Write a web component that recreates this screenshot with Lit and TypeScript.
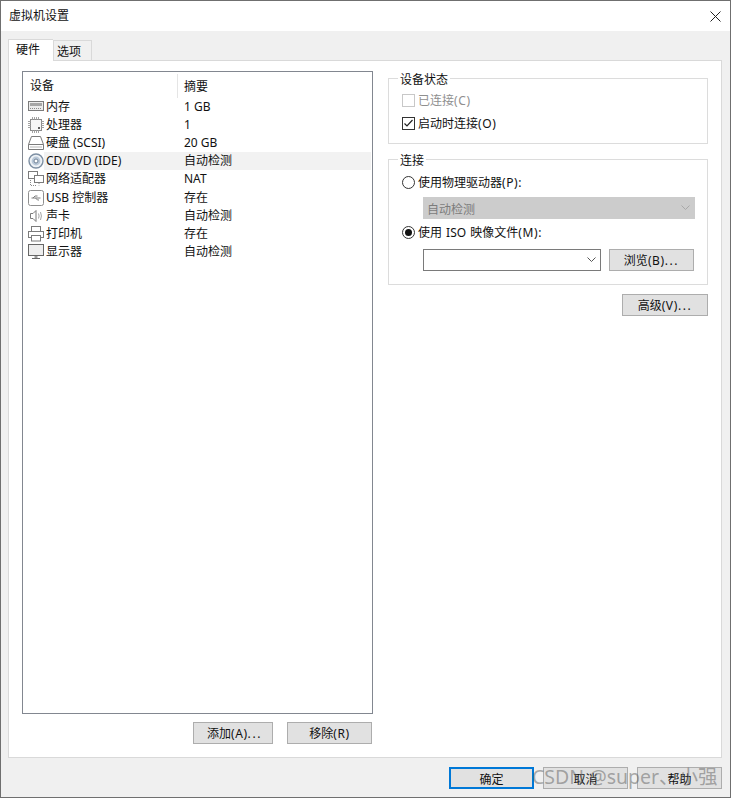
import { LitElement, html, css, svg } from "lit";
import { customElement } from "lit/decorators.js";

const g = "#7b7b7b";
const icons: Record<string, unknown> = {
  mem: svg`<rect x="0.5" y="2.5" width="15" height="9" fill="#ececec" stroke="${g}"/><rect x="2" y="4" width="12" height="3" fill="#a6a6a6"/><path d="M2 9.5h12" stroke="#8a8a8a" stroke-dasharray="1 1"/>`,
  cpu: svg`<rect x="2.5" y="2.5" width="11" height="11" fill="#f6f6f6" stroke="#8a8a8a"/><path d="M0 4.5h2.5M0 6.5h2.5M0 8.5h2.5M0 10.5h2.5M13.5 4.5h2.5M13.5 6.5h2.5M13.5 8.5h2.5M13.5 10.5h2.5M4.5 0v2.5M6.5 0v2.5M8.5 0v2.5M10.5 0v2.5M4.5 13.5v2.5M6.5 13.5v2.5M8.5 13.5v2.5M10.5 13.5v2.5" stroke="#a3a3a3"/><rect x="10" y="10" width="2" height="2" fill="#5f5f5f"/>`,
  disk: svg`<path d="M3.5 1.5h9l3 8v5h-15v-5z" fill="#fff" stroke="${g}"/><path d="M0.5 9.5h15" stroke="${g}"/><path d="M2 12h12" stroke="#b5b5b5"/>`,
  cd: svg`<circle cx="8" cy="8" r="7" fill="#eef2f6" stroke="#7d8fa3" stroke-width="1.4"/><circle cx="8" cy="8" r="4.4" fill="#b9c8d8"/><circle cx="8" cy="8" r="2" fill="#fff" stroke="#6f8196"/>`,
  net: svg`<rect x="0.5" y="0.5" width="9" height="7" fill="#fff" stroke="${g}"/><rect x="6.5" y="4.5" width="9" height="7" fill="#fff" stroke="${g}"/><path d="M2.5 9v5.5h6M11 12v2.5" stroke="#8a8a8a" stroke-dasharray="1 1" fill="none"/>`,
  usb: svg`<rect x="0.5" y="0.5" width="15" height="15" rx="2" fill="#fff" stroke="#8f8f8f"/><path d="M3.5 8h9M5 8l2-2h2.5M7.5 8l2 2h1.5" stroke="#7d7d7d" fill="none"/>`,
  snd: svg`<path d="M2.5 5.5h2.5l3-3v11l-3-3h-2.5z" fill="#fff" stroke="${g}"/><path d="M10.5 5.5q1.2 2.5 0 5M12.5 4q1.8 4 0 8" stroke="#a5a5a5" fill="none"/>`,
  prn: svg`<rect x="3.5" y="0.5" width="9" height="5" fill="#fff" stroke="${g}"/><rect x="0.5" y="5.5" width="15" height="6" fill="#fff" stroke="${g}"/><rect x="3.5" y="9.5" width="9" height="5.5" fill="#fff" stroke="${g}"/>`,
  mon: svg`<rect x="0.5" y="0.5" width="15" height="11" fill="#eeeeee" stroke="#666"/><path d="M8 12v2" stroke="#999" stroke-width="3"/><path d="M4 14.5h8" stroke="#666"/>`,
};

const rows = [
  ["mem", "内存", "1 GB"],
  ["cpu", "处理器", "1"],
  ["disk", "硬盘 (SCSI)", "20 GB"],
  ["cd", "CD/DVD (IDE)", "自动检测"],
  ["net", "网络适配器", "NAT"],
  ["usb", "USB 控制器", "存在"],
  ["snd", "声卡", "自动检测"],
  ["prn", "打印机", "存在"],
  ["mon", "显示器", "自动检测"],
];

@customElement("app-root")
export class AppRoot extends LitElement {
  static styles = css`
    :host {
      display: block;
      position: relative;
      width: 731px;
      height: 798px;
      font: 12px/16px "Noto Sans", "Noto Sans CJK SC", sans-serif;
      color: #111;
      overflow: hidden;
    }
    * { box-sizing: border-box; }
    .win {
      width: 731px;
      height: 798px;
      border: 1px solid #6f6f6f;
      background: #f0f0f0;
      display: flex;
      flex-direction: column;
    }
    .title {
      height: 30px;
      flex: none;
      background: #fff;
      display: flex;
      align-items: center;
      justify-content: space-between;
      padding: 0 9px 0 8px;
    }
    .close { width: 11px; height: 11px; display: block; }
    .tabs {
      flex: none;
      height: 29px;
      padding: 7px 0 0 7px;
      display: flex;
      align-items: flex-end;
    }
    .tab {
      height: 20px;
      width: 39px;
      border: 1px solid #d9d9d9;
      border-bottom: 0;
      padding-left: 3px;
      line-height: 21px;
    }
    .tab.on {
      height: 22px;
      width: 45px;
      padding-left: 7px;
      background: #fff;
      border-right: 0;
      margin-bottom: -1px;
      position: relative;
      line-height: 19px;
    }
    .panel {
      flex: none;
      height: 698px;
      margin: 0 8px 0 7px;
      background: #fff;
      border: 1px solid #d9d9d9;
      padding: 10px 13px 0 13px;
      display: flex;
      gap: 15px;
    }
    .left { width: 351px; display: flex; flex-direction: column; }
    .list {
      height: 643px;
      border: 1px solid #828790;
      padding: 1px;
    }
    .head {
      display: grid;
      grid-template-columns: 153px 1fr;
      height: 24px;
      align-items: center;
      margin-bottom: 1px;
      line-height: 26px;
    }
    .head span:first-child { padding-left: 6px; }
    .head span:last-child {
      height: 24px;
      border-left: 1px solid #e5e5e5;
      padding-left: 6px;
    }
    .row {
      display: grid;
      grid-template-columns: 20px 133px 1fr;
      height: 18px;
      line-height: 18px;
      align-items: center;
    }
    .row:nth-child(n + 7) { position: relative; top: 1px; }
    .row svg { width: 16px; height: 16px; margin-left: 4px; display: block; }
    .row .name { padding-left: 2px; height: 18px; }
    .row .val { padding-left: 7px; height: 18px; }
    .row.sel .name, .row.sel .val { background: #f2f2f2; }
    .actions {
      display: flex;
      justify-content: flex-end;
      gap: 14px;
      margin-top: 8px;
      padding-right: 1px;
    }
    .btn {
      height: 22px;
      width: 85px;
      background: #e1e1e1;
      border: 1px solid #adadad;
      text-align: center;
      line-height: 22px;
    }
    .btn.add { width: 80px; padding-left: 3px; }
    .p { letter-spacing: 0.6px; }
    .d { letter-spacing: 1.6px; }
    .right { width: 320px; display: flex; flex-direction: column; }
    fieldset {
      margin: 0;
      padding: 0 0 0 13px;
      min-width: 0;
      border: 1px solid #dcdcdc;
    }
    legend { padding: 0 2px; margin-left: -4px; line-height: 18px; height: 14px; }
    .g1 { height: 73px; padding-top: 7px; }
    .g2 { height: 133px; margin-top: 8px; }
    .opt {
      display: flex;
      align-items: center;
      gap: 3px;
      height: 16px;
      line-height: 17px;
      word-spacing: 1px;
    }
    .box {
      width: 13px;
      height: 13px;
      border: 1px solid #333;
      background: #fff;
      flex: none;
      display: block;
    }
    .dis { color: #8f8f8f; }
    .dis .box { border-color: #c8c8c8; }
    .radio {
      width: 13px;
      height: 13px;
      flex: none;
      display: block;
    }
    .g1 .opt + .opt { margin-top: 7px; }
    .sub { padding-left: 21px; display: flex; gap: 8px; }
    .sel-dis {
      width: 272px;
      height: 22px;
      background: #cccccc;
      color: #7c7c7c;
      display: flex;
      align-items: center;
      justify-content: space-between;
      padding: 0 5px 0 4px;
      margin-top: 7px;
    }
    .sel-dis span { padding-top: 3px; }
    .combo {
      width: 178px;
      height: 22px;
      border: 1px solid #7a7a7a;
      background: #fff;
      display: flex;
      align-items: center;
      justify-content: flex-end;
      padding-right: 4px;
    }
    .chev { width: 9px; height: 6px; display: block; }
    .g2 .r1 { margin-top: 8px; }
    .g2 .r2 { margin-top: 5px; }
    .g2 .sub.last { margin-top: 9px; }
    .adv { align-self: flex-end; margin-top: 9px; width: 86px; }
    .foot {
      flex: none;
      display: flex;
      justify-content: flex-end;
      gap: 9px;
      padding: 9px 8px 0 0;
    }
    .foot .btn { line-height: 23px; }
    .foot .btn.def { border: 2px solid #0078d7; line-height: 21px; }
    .mark {
      position: absolute;
      left: 532px;
      top: 763px;
      font: 19.5px/28px "Noto Sans", "Noto Sans CJK SC", sans-serif;
      color: rgba(105, 105, 105, 0.55);
      white-space: nowrap;
      pointer-events: none;
    }
  `;

  render() {
    const chev = (c: string) => html`<svg class="chev" viewBox="0 0 9 6"><path d="M0.5 0.5L4.5 4.5L8.5 0.5" fill="none" stroke="${c}"/></svg>`;
    return html`
      <div class="win">
        <div class="title">
          <span>虚拟机设置</span>
          <svg class="close" viewBox="0 0 11 11"><path d="M0.5 0.5L10.5 10.5M10.5 0.5L0.5 10.5" stroke="#222" fill="none"/></svg>
        </div>
        <div class="tabs">
          <div class="tab on">硬件</div>
          <div class="tab">选项</div>
        </div>
        <div class="panel">
          <div class="left">
            <div class="list">
              <div class="head"><span>设备</span><span>摘要</span></div>
              ${rows.map(
                ([i, n, v]) => html`<div class="row ${i === "cd" ? "sel" : ""}">
                  <svg viewBox="0 0 16 16">${icons[i]}</svg>
                  <span class="name">${n}</span>
                  <span class="val">${v}</span>
                </div>`
              )}
            </div>
            <div class="actions">
              <div class="btn add">添加<span class="p">(A)</span><span class="d">...</span></div>
              <div class="btn">移除<span class="p">(R)</span></div>
            </div>
          </div>
          <div class="right">
            <fieldset class="g1">
              <legend>设备状态</legend>
              <div class="opt dis"><span class="box"></span><span>已连接<span class="p">(C)</span></span></div>
              <div class="opt">
                <svg class="box" viewBox="0 0 11 11"><path d="M1.5 5.5L4 8L9.5 2" fill="none" stroke="#222" stroke-width="1.2"/></svg>
                <span>启动时连接<span class="p">(O)</span></span>
              </div>
            </fieldset>
            <fieldset class="g2">
              <legend>连接</legend>
              <div class="opt r1">
                <svg class="radio" viewBox="0 0 13 13"><circle cx="6.5" cy="6.5" r="6" fill="#fff" stroke="#333"/></svg>
                <span>使用物理驱动器<span class="p">(P):</span></span>
              </div>
              <div class="sub"><div class="sel-dis"><span>自动检测</span>${chev("#a8a8a8")}</div></div>
              <div class="opt r2">
                <svg class="radio" viewBox="0 0 13 13"><circle cx="6.5" cy="6.5" r="6" fill="#fff" stroke="#333"/><circle cx="6.5" cy="6.5" r="3.5" fill="#111"/></svg>
                <span>使用 ISO 映像文件<span class="p">(M):</span></span>
              </div>
              <div class="sub last">
                <div class="combo">${chev("#555")}</div>
                <div class="btn">浏览<span class="p">(B)</span><span class="d">...</span></div>
              </div>
            </fieldset>
            <div class="btn adv">高级<span class="p">(V)</span><span class="d">...</span></div>
          </div>
        </div>
        <div class="foot">
          <div class="btn def">确定</div>
          <div class="btn">取消</div>
          <div class="btn">帮助</div>
        </div>
      </div>
      <div class="mark">CSDN @super、小强</div>
    `;
  }
}
